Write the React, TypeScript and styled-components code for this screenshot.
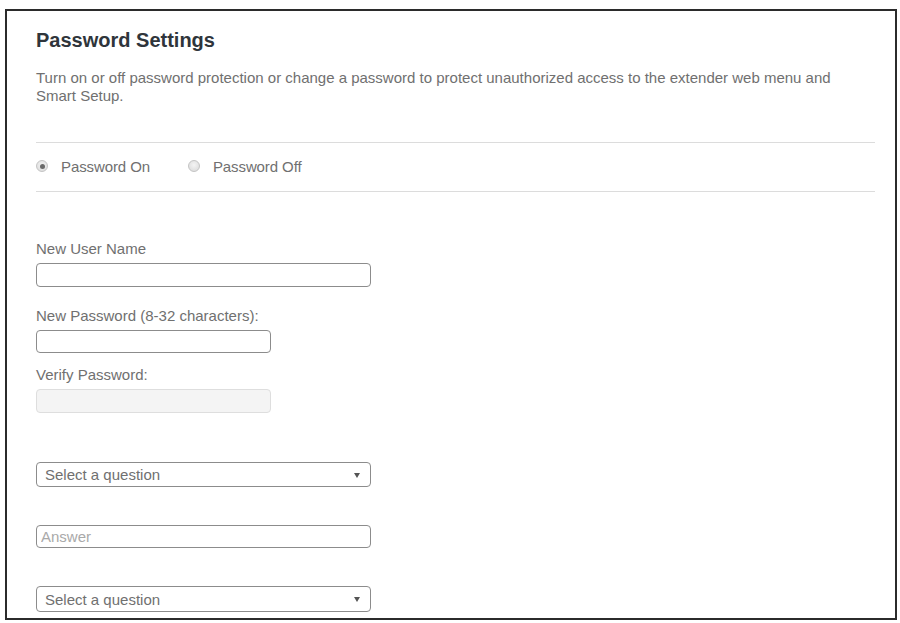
import React from "react";
import styled, { createGlobalStyle } from "styled-components";

const GlobalStyle = createGlobalStyle`
  html, body {
    margin: 0;
    padding: 0;
    background: #ffffff;
  }
  body {
    font-family: "Liberation Sans", Arial, sans-serif;
  }
`;

const Frame = styled.div`
  box-sizing: border-box;
  margin: 9px 3px 0 5px;
  height: 611px;
  border: 2px solid #2b2b2b;
  background: #fff;
  overflow: hidden;
`;

const Content = styled.div`
  padding: 18px 20px 0 29px;
`;

const Title = styled.h2`
  margin: 0;
  font-size: 20px;
  line-height: 23px;
  font-weight: bold;
  color: #2f353b;
`;

const Description = styled.p`
  margin: 17px 0 0;
  font-size: 15px;
  line-height: 18px;
  color: #707070;
  padding-right: 20px;
`;

const RadioRow = styled.div`
  margin-top: 37px;
  height: 48px;
  border-top: 1px solid #dcdcdc;
  border-bottom: 1px solid #dcdcdc;
  display: flex;
  align-items: center;
  gap: 38px;
`;

const RadioLabel = styled.label`
  display: flex;
  align-items: center;
  gap: 13px;
  font-size: 15px;
  line-height: 18px;
  color: #707070;
  letter-spacing: -0.1px;
`;

const Radio = styled.input.attrs({ type: "radio" })`
  appearance: none;
  margin: 0 0 2px 0;
  width: 12px;
  height: 12px;
  border-radius: 50%;
  border: 1px solid #c4c4c4;
  background: radial-gradient(circle at 50% 40%, #f4f4f4 0%, #d8d8d8 100%);
  box-sizing: border-box;
  display: grid;
  place-items: center;

  &:checked::after {
    content: "";
    width: 5px;
    height: 5px;
    border-radius: 50%;
    background: #6a6a6a;
  }
`;

const Field = styled.div<{ $top: number }>`
  display: flex;
  flex-direction: column;
  gap: 5px;
  margin-top: ${(p) => p.$top}px;
`;

const Label = styled.label`
  font-size: 15px;
  line-height: 18px;
  color: #707070;
`;

const TextInput = styled.input<{ $width: number; $height: number }>`
  box-sizing: border-box;
  width: ${(p) => p.$width}px;
  height: ${(p) => p.$height}px;
  margin: 0;
  padding: 0 4px;
  border: 1px solid #8c8c8c;
  border-radius: 4px;
  background: #fff;
  font-family: "Liberation Sans", Arial, sans-serif;
  font-size: 15px;
  color: #666;
  outline: none;

  &::placeholder {
    color: #a9a9a9;
  }

  &:disabled {
    border-color: #dedede;
    background: #f4f4f4;
  }
`;

const SelectWrap = styled.div`
  position: relative;
  width: 335px;
`;

const Select = styled.select<{ $height: number }>`
  appearance: none;
  box-sizing: border-box;
  width: 100%;
  height: ${(p) => p.$height}px;
  margin: 0;
  padding: 0 24px 0 8px;
  border: 1px solid #8c8c8c;
  border-radius: 4px;
  background: #fff;
  font-family: "Liberation Sans", Arial, sans-serif;
  font-size: 15px;
  color: #707070;
  outline: none;
`;

const Arrow = styled.span`
  position: absolute;
  right: 11px;
  top: 50%;
  margin-top: -2px;
  width: 0;
  height: 0;
  border-left: 3px solid transparent;
  border-right: 3px solid transparent;
  border-top: 5px solid #555;
  pointer-events: none;
`;

const Block = styled.div<{ $top: number }>`
  margin-top: ${(p) => p.$top}px;
`;

const QuestionSelect = ({ height }: { height: number }) => (
  <SelectWrap>
    <Select $height={height} defaultValue="">
      <option value="">Select a question</option>
      <option value="pet">What is the name of your first pet?</option>
      <option value="city">In what city were you born?</option>
    </Select>
    <Arrow />
  </SelectWrap>
);

export default function App() {
  return (
    <>
      <GlobalStyle />
      <Frame>
        <Content>
          <Title>Password Settings</Title>
          <Description>
            Turn on or off password protection or change a password to protect unauthorized access to the
            extender web menu and Smart Setup.
          </Description>

          <RadioRow>
            <RadioLabel>
              <Radio name="pwd" defaultChecked />
              Password On
            </RadioLabel>
            <RadioLabel>
              <Radio name="pwd" />
              Password Off
            </RadioLabel>
          </RadioRow>

          <Field $top={48}>
            <Label>New User Name</Label>
            <TextInput $width={335} $height={24} />
          </Field>

          <Field $top={20}>
            <Label>New Password (8-32 characters):</Label>
            <TextInput type="password" $width={235} $height={23} />
          </Field>

          <Field $top={13}>
            <Label>Verify Password:</Label>
            <TextInput type="password" $width={235} $height={24} disabled />
          </Field>

          <Block $top={49}>
            <QuestionSelect height={25} />
          </Block>

          <Block $top={38}>
            <TextInput $width={335} $height={23} placeholder="Answer" />
          </Block>

          <Block $top={38}>
            <QuestionSelect height={26} />
          </Block>
        </Content>
      </Frame>
    </>
  );
}
